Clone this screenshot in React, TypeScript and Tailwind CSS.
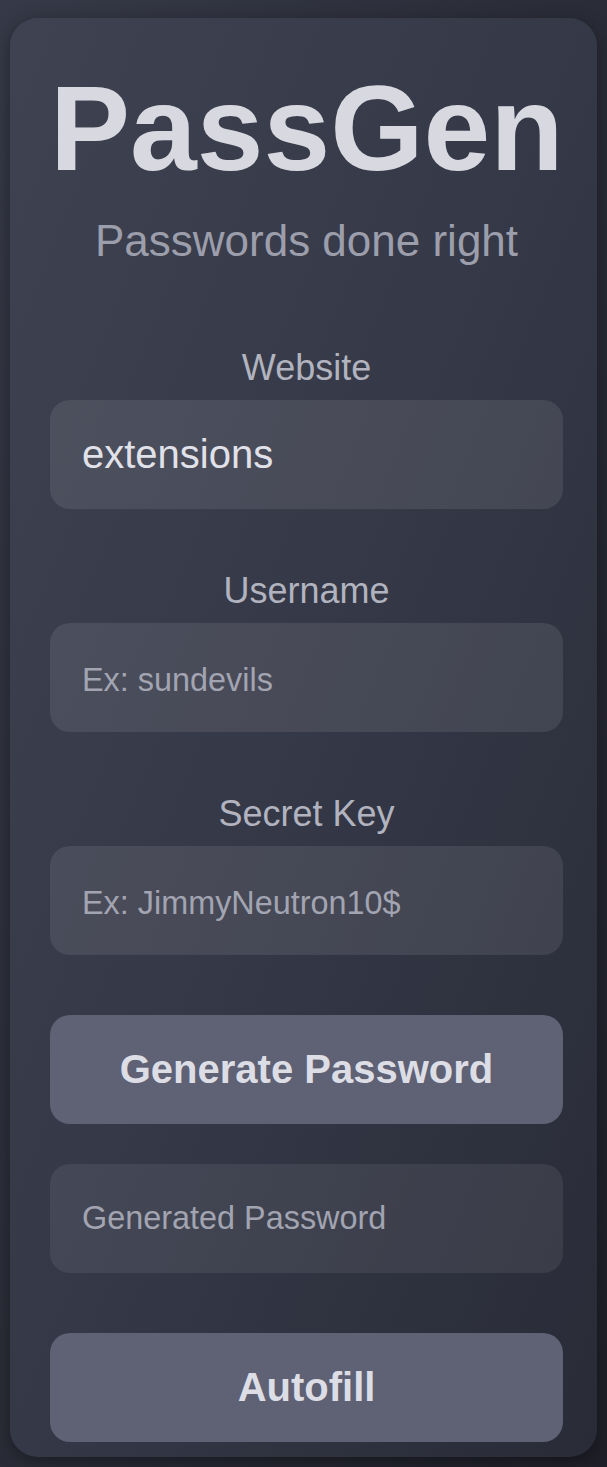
import React, { useState } from 'react';

const font = "font-['Liberation_Sans',Arial,sans-serif]";

function Field({
    label,
    value,
    placeholder,
    onChange,
}: {
    label: string;
    value: string;
    placeholder: string;
    onChange: (v: string) => void;
}) {
    return (
        <div className="flex flex-col">
            <label className="text-center text-[36px] leading-[42px] text-[#b1b3bf] mb-[11px]">{label}</label>
            <input
                value={value}
                placeholder={placeholder}
                onChange={(e) => onChange(e.target.value)}
                className="h-[109px] w-full rounded-[20px] bg-white/[0.09] pl-[32px] pr-4 text-[40px] text-[#e1e2e9] outline-none placeholder:text-[32.4px] placeholder:text-[#a2a4b1]"
            />
        </div>
    );
}

export default function App() {
    const [website, setWebsite] = useState('extensions');
    const [username, setUsername] = useState('');
    const [secret, setSecret] = useState('');
    const [generated, setGenerated] = useState('');

    const generate = () => {
        if (!website || !username || !secret) return;
        // simple deterministic mix, good enough for the demo
        const src = `${website}:${username}:${secret}`;
        let h = 0;
        for (let i = 0; i < src.length; i++) h = (h * 31 + src.charCodeAt(i)) >>> 0;
        setGenerated(h.toString(36) + '!' + src.length);
    };

    return (
        <div className={`${font} min-h-screen bg-gradient-to-br from-[#363947] to-[#1e1f28] pt-[18px] pb-[10px] px-[10px]`}>
            <div className="rounded-[28px] bg-gradient-to-br from-[#3f4250] via-[#353847] to-[#292b37] pt-[43px] pb-[15px] pl-[40px] pr-[34px] shadow-[0_4px_18px_rgba(0,0,0,0.35)]">
                <h1 className="text-center text-[120px] font-bold leading-[134px] text-[#d8d9e0]">PassGen</h1>
                <p className="mt-[21px] text-center text-[44px] leading-[50px] text-[#9c9eab]">Passwords done right</p>

                <div className="mt-[80.6px] flex flex-col gap-[61px]">
                    <Field label="Website" value={website} placeholder="Ex: google" onChange={setWebsite} />
                    <Field label="Username" value={username} placeholder="Ex: sundevils" onChange={setUsername} />
                    <Field label="Secret Key" value={secret} placeholder="Ex: JimmyNeutron10$" onChange={setSecret} />
                </div>

                <button
                    onClick={generate}
                    className="mt-[60px] flex h-[109px] w-full items-center justify-center rounded-[20px] bg-[#5f6174] text-[40px] font-bold text-[#dcdde5]"
                >
                    Generate Password
                </button>

                <input
                    readOnly
                    value={generated}
                    placeholder="Generated Password"
                    className="mt-[40px] h-[109px] w-full rounded-[20px] bg-white/[0.07] pl-[32px] pr-4 text-[32.4px] text-[#e1e2e9] outline-none placeholder:text-[#a2a4b1]"
                />

                <button className="mt-[60px] flex h-[109px] w-full items-center justify-center rounded-[20px] bg-[#5f6174] text-[40px] font-bold text-[#dcdde5]">
                    Autofill
                </button>
            </div>
        </div>
    );
}
